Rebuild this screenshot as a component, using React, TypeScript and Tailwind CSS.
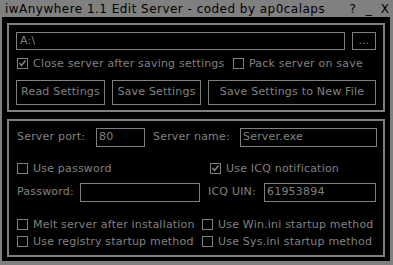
import React from "react";

function Box({ checked }: { checked?: boolean }) {
  return (
    <span className="relative block w-[11px] h-[11px] shrink-0 border border-[#808080]">
      {checked && (
        <svg className="absolute left-0 top-0" width="9" height="9" viewBox="0 0 9 9">
          <path d="M1.5 4 L3.5 6.5 L7.5 1.5" stroke="#808080" strokeWidth="1.6" fill="none" />
        </svg>
      )}
    </span>
  );
}

function Check({ label, checked, w }: { label: string; checked?: boolean; w?: string }) {
  return (
    <div className={`flex items-center h-[11px] gap-[5px] ${w ?? ""}`}>
      <Box checked={checked} />
      <span className="leading-none whitespace-nowrap">{label}</span>
    </div>
  );
}

export default function App() {
  return (
    <div
      className="w-[393px] h-[265px] bg-black flex flex-col text-[#808080] text-[11px] tracking-[0.2px] overflow-hidden"
      style={{ fontFamily: '"DejaVu Sans", sans-serif' }}
    >
      <div className="h-[17px] bg-[#808080] text-black flex items-center pl-[5px] text-[12px] tracking-[0.47px] leading-none shrink-0">
        <span className="whitespace-nowrap">iwAnywhere 1.1 Edit Server - coded by ap0calaps</span>
        <span className="ml-auto w-[16px] text-center">?</span>
        <span className="w-[16px] text-center">_</span>
        <span className="w-[16px] text-center">X</span>
      </div>
      <div className="flex-1 border-l-2 border-r-[3px] border-b-[4px] border-[#808080] pl-[5px] pr-[5px] pt-[6px] flex flex-col gap-[7px]">
        {/* Panel 1 */}
        <div className="h-[89px] border-2 border-[#808080] pl-[7px] pt-[7px] flex flex-col">
          <div className="flex gap-[7px]">
            <div className="w-[329px] h-[18px] border border-[#808080] flex items-center pl-[3px]">A:\</div>
            <div className="w-[24px] h-[18px] border border-[#808080] flex items-center justify-center">...</div>
          </div>
          <div className="flex mt-[8px] ml-[1px]">
            <Check label="Close server after saving settings" checked w="w-[216px]" />
            <Check label="Pack server on save" />
          </div>
          <div className="flex gap-[7px] mt-[11px]">
            <div className="w-[89px] h-[25px] border border-[#808080] flex items-center justify-center whitespace-nowrap">Read Settings</div>
            <div className="w-[89px] h-[25px] border border-[#808080] flex items-center justify-center whitespace-nowrap">Save Settings</div>
            <div className="w-[168px] h-[25px] border border-[#808080] flex items-center justify-center whitespace-nowrap">Save Settings to New File</div>
          </div>
        </div>
        {/* Panel 2 */}
        <div className="h-[138px] border-2 border-[#808080] pl-[8px] pt-[7px] flex flex-col">
          <div className="flex items-center h-[19px]">
            <span className="w-[79px] whitespace-nowrap">Server port:</span>
            <div className="w-[49px] h-[19px] border border-[#808080] flex items-center pl-[2px]">80</div>
            <span className="w-[87px] ml-[8px] whitespace-nowrap">Server name:</span>
            <div className="w-[137px] h-[19px] border border-[#808080] flex items-center pl-[2px]">Server.exe</div>
          </div>
          <div className="flex mt-[16px]">
            <Check label="Use password" w="w-[193px]" />
            <Check label="Use ICQ notification" checked />
          </div>
          <div className="flex items-center h-[19px] mt-[9px]">
            <span className="w-[63px] whitespace-nowrap">Password:</span>
            <div className="w-[120px] h-[19px] border border-[#808080]" />
            <span className="w-[56px] ml-[8px] whitespace-nowrap">ICQ UIN:</span>
            <div className="w-[112px] h-[19px] border border-[#808080] flex items-center pl-[2px]">61953894</div>
          </div>
          <div className="flex mt-[17px]">
            <Check label="Melt server after installation" w="w-[185px]" />
            <Check label="Use Win.ini startup method" />
          </div>
          <div className="flex mt-[6px]">
            <Check label="Use registry startup method" w="w-[185px]" />
            <Check label="Use Sys.ini startup method" />
          </div>
        </div>
      </div>
    </div>
  );
}
